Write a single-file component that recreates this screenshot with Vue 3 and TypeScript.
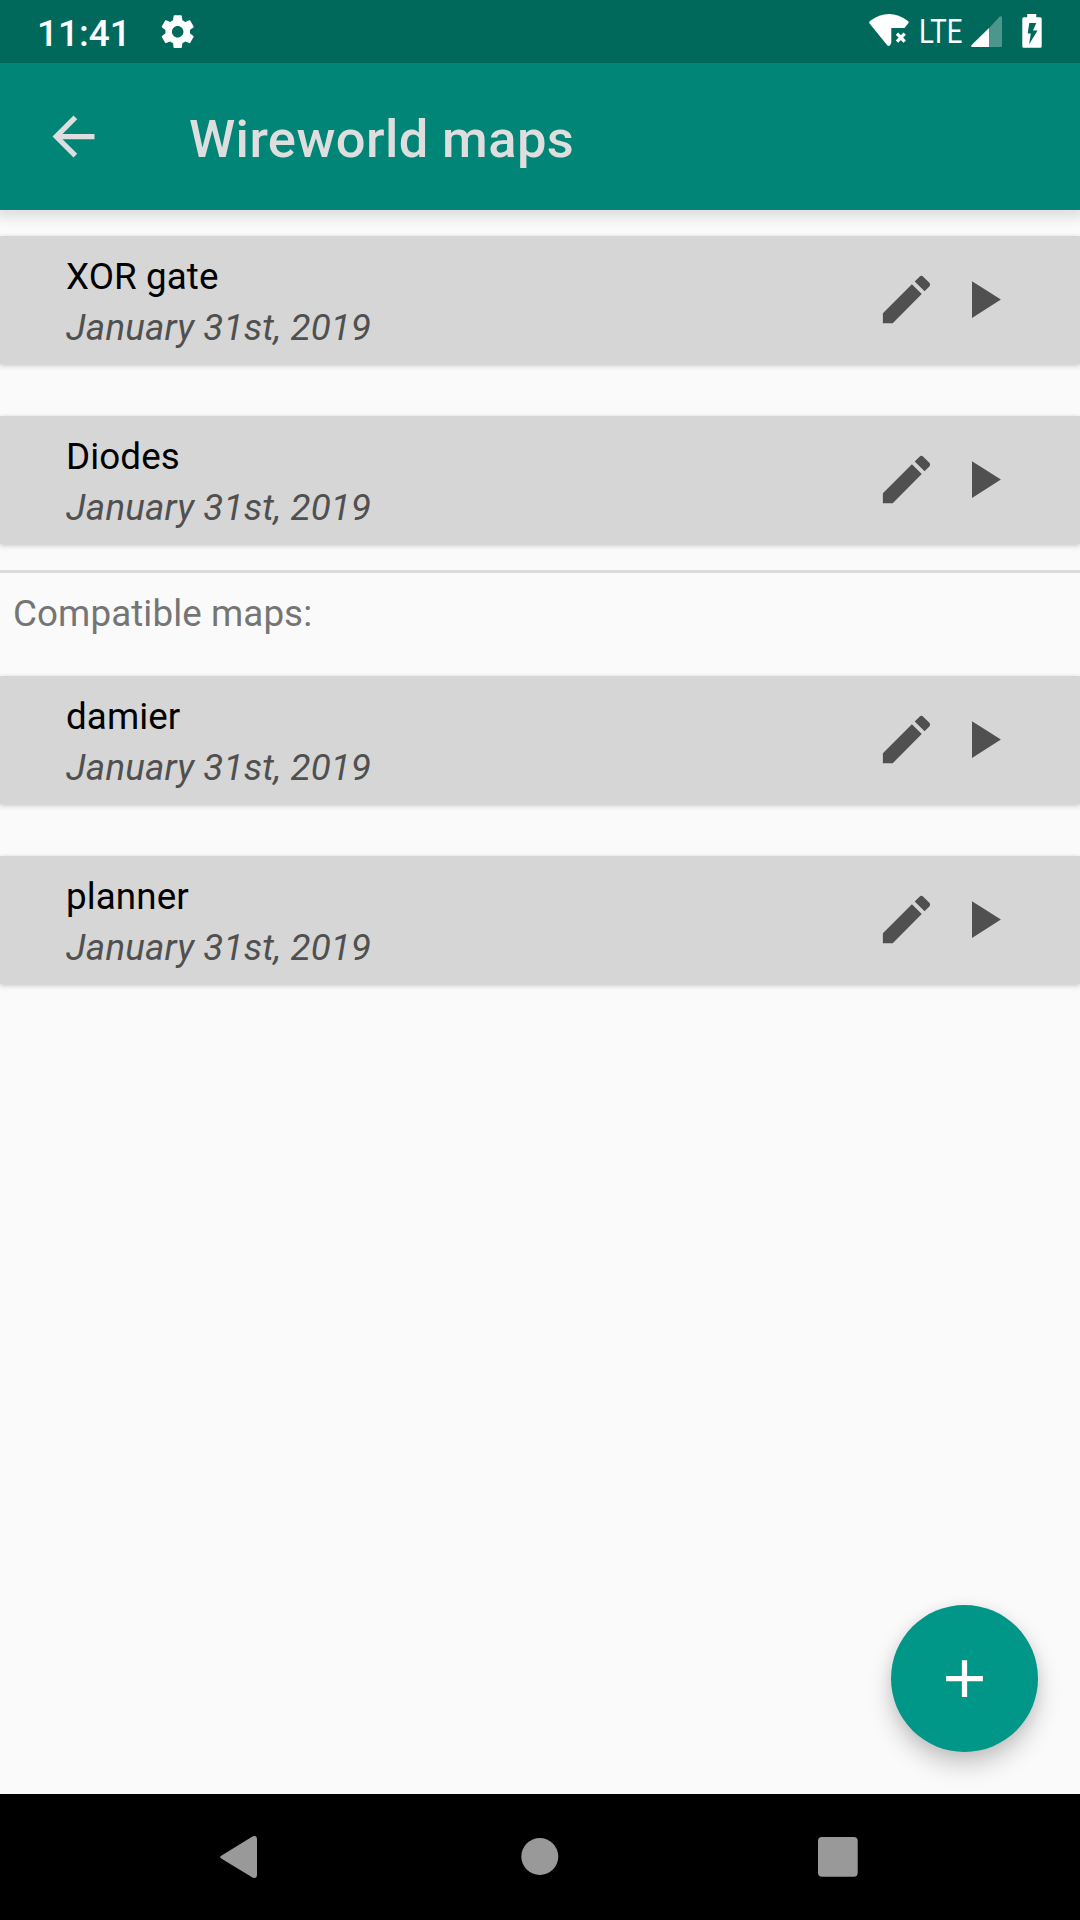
<script setup lang="ts">
interface MapEntry {
  name: string
  date: string
}

interface MapSection {
  id: string
  heading?: string
  maps: MapEntry[]
}

const sections: MapSection[] = [
  {
    id: 'own',
    maps: [
      { name: 'XOR gate', date: 'January 31st, 2019' },
      { name: 'Diodes', date: 'January 31st, 2019' },
    ],
  },
  {
    id: 'compatible',
    heading: 'Compatible maps:',
    maps: [
      { name: 'damier', date: 'January 31st, 2019' },
      { name: 'planner', date: 'January 31st, 2019' },
    ],
  },
]
</script>

<template>
  <div class="screen">
    <header class="status-bar">
      <span class="clock">11:41</span>
      <svg class="gear" viewBox="0 0 24 24">
        <path d="M19.43 12.98c.04-.32.07-.64.07-.98s-.03-.66-.07-.98l2.11-1.65c.19-.15.24-.42.12-.64l-2-3.46c-.12-.22-.39-.3-.61-.22l-2.49 1c-.52-.4-1.08-.73-1.69-.98l-.38-2.65C14.46 2.18 14.25 2 14 2h-4c-.25 0-.46.18-.49.42l-.38 2.65c-.61.25-1.17.59-1.69.98l-2.49-1c-.23-.09-.49 0-.61.22l-2 3.46c-.13.22-.07.49.12.64l2.11 1.65c-.04.32-.07.65-.07.98s.03.66.07.98l-2.11 1.65c-.19.15-.24.42-.12.64l2 3.46c.12.22.39.3.61.22l2.49-1c.52.4 1.08.73 1.69.98l.38 2.65c.03.24.24.42.49.42h4c.25 0 .46-.18.49-.42l.38-2.65c.61-.25 1.17-.59 1.69-.98l2.49 1c.23.09.49 0 .61-.22l2-3.46c.12-.22.07-.49-.12-.64l-2.11-1.65zM12 15.5c-1.93 0-3.500-1.570-3.500-3.500s1.570-3.500 3.500-3.500 3.500 1.570 3.500 3.500-1.570 3.500-3.500 3.500z" />
      </svg>
      <div class="indicators">
        <svg class="wifi" viewBox="0 0 40 34">
          <path d="M.4 9.300Q-.2 8 1 7C13-2.300 27-2.300 39 7Q40.200 8 39.300 9.300L35.500 14H22.300V28.800L21 31.300Q19.700 32.800 18.200 31.300Z" />
          <path class="cross" d="M28 19.600L35.700 27.600M35.700 19.600L28 27.600" />
        </svg>
        <span class="network">LTE</span>
        <svg class="signal" viewBox="0 0 31 31">
          <path class="dim" d="M18 12.300L28.700 .6Q31 -.8 31 2V29.500Q31 31 29.500 31H18Z" />
          <path d="M18 12V31H1.200Q-.6 30.700 .4 29.300Z" />
        </svg>
        <svg class="battery" viewBox="0 0 20 34">
          <path fill-rule="evenodd" d="M5.200 0H14.300V3.300H18.200Q19.700 3.300 19.700 4.800V32.300Q19.700 33.800 18.200 33.800H1.800Q.3 33.800 .3 32.300V4.800Q.3 3.300 1.800 3.300H5.200ZM7.300 9L5.700 19.400H8.800L7 30.500L15.600 16.500H11L14.300 9Z" />
        </svg>
      </div>
    </header>

    <div class="app-bar">
      <svg class="icon" viewBox="0 0 24 24">
        <path d="M20 11H7.830l5.590-5.590L12 4l-8 8 8 8 1.410-1.410L7.830 13H20v-2z" />
      </svg>
      <h1 class="title">Wireworld maps</h1>
    </div>

    <main class="content">
      <section v-for="section in sections" :key="section.id" class="section">
        <h2 v-if="section.heading" class="heading">{{ section.heading }}</h2>
        <article v-for="entry in section.maps" :key="entry.name" class="card">
          <div class="details">
            <div class="name">{{ entry.name }}</div>
            <div class="date">{{ entry.date }}</div>
          </div>
          <div class="actions">
            <svg class="icon" viewBox="0 0 24 24">
              <path d="M3 17.250V21h3.750L17.810 9.940l-3.750-3.750L3 17.250zM20.710 7.040c.39-.39.39-1.020 0-1.410l-2.340-2.340c-.39-.39-1.020-.39-1.410 0l-1.830 1.830 3.750 3.750 1.830-1.830z" />
            </svg>
            <svg class="icon" viewBox="0 0 24 24">
              <path d="M8 5v14l11-7z" />
            </svg>
          </div>
        </article>
      </section>

      <button class="fab" type="button" aria-label="Add map">
        <svg class="icon" viewBox="0 0 24 24">
          <path d="M19 13h-6v6h-2v-6H5v-2h6V5h2v6h6v2z" />
        </svg>
      </button>
    </main>

    <nav class="nav-bar">
      <svg viewBox="0 0 42 42">
        <path d="M3.600 19.400L34.500 .4Q39 -1.200 39 3V39Q39 43.200 34.500 41.600L3.600 22.800Q.6 21 3.600 19.400Z" />
      </svg>
      <svg viewBox="0 0 42 42">
        <circle cx="21.800" cy="20.500" r="18.500" />
      </svg>
      <svg viewBox="0 0 42 42">
        <rect x="1" y="1" width="39.700" height="39.700" rx="4" />
      </svg>
    </nav>
  </div>
</template>

<style>
body {
  margin: 0;
}
</style>

<style scoped>
.screen {
  display: flex;
  flex-direction: column;
  width: 1080px;
  height: 1920px;
  overflow: hidden;
  background: #fafafa;
  font-family: Roboto, "Liberation Sans", sans-serif;
}

svg {
  display: block;
  flex: none;
  fill: currentColor;
}

.icon {
  width: 63px;
  height: 63px;
}

.status-bar {
  display: flex;
  align-items: center;
  flex: none;
  position: relative;
  z-index: 2;
  box-sizing: border-box;
  height: 63px;
  padding: 0 38px 0 37px;
  background: #00695c;
  color: #fff;
}

.clock {
  width: 121px;
  padding-top: 5px;
  font-size: 37px;
  font-weight: 500;
  line-height: 44px;
}

.gear {
  width: 39.400px;
  height: 39.400px;
}

.indicators {
  display: flex;
  align-items: flex-start;
  align-self: flex-start;
  margin-left: auto;
  padding-top: 14px;
}

.wifi {
  width: 40px;
  height: 34px;
}

.cross {
  fill: none;
  stroke: currentColor;
  stroke-width: 3.400;
}

.network {
  width: 52px;
  margin-left: 10px;
  font-size: 32.500px;
  line-height: 36px;
  transform: scaleX(0.850);
  transform-origin: left;
}

.signal {
  width: 31px;
  height: 31px;
  margin: 2px 20px 0 0;
}

.dim {
  opacity: 0.3;
}

.battery {
  width: 20px;
  height: 34px;
}

.app-bar {
  display: flex;
  align-items: center;
  flex: none;
  position: relative;
  z-index: 1;
  box-sizing: border-box;
  height: 147px;
  padding: 0 42px;
  background: #008577;
  color: #dedede;
  box-shadow: 0 4px 10px 4px rgba(0, 0, 0, 0.080), 0 0 20px 4px rgba(0, 0, 0, 0.040);
}

.title {
  margin: 5px 0 0 84px;
  font-size: 52.500px;
  font-weight: 500;
  letter-spacing: 0.400px;
  line-height: 62px;
}

.content {
  position: relative;
  flex: 1;
}

.section {
  display: flex;
  flex-direction: column;
  gap: 52px;
  padding: 26px 0;
}

.section + .section {
  gap: 0;
  padding-top: 0;
  border-top: 3px solid #dadada;
}

.section + .section .card + .card {
  margin-top: 52px;
}

.heading {
  box-sizing: border-box;
  height: 103px;
  margin: 0;
  padding: 15px 13px 0;
  color: #757575;
  font-size: 36.750px;
  font-weight: 400;
  letter-spacing: 0.100px;
  line-height: 51px;
}

.card {
  display: flex;
  align-items: center;
  justify-content: space-between;
  box-sizing: border-box;
  height: 128px;
  padding: 0 66px;
  background: #d6d6d6;
  box-shadow: 0 2px 5px rgba(0, 0, 0, 0.170), 0 0 4px rgba(0, 0, 0, 0.060);
}

.details {
  padding-top: 4px;
  font-size: 36.750px;
  line-height: 51px;
}

.name {
  color: #000;
  letter-spacing: 0.100px;
}

.date {
  color: #505050;
  font-style: italic;
  letter-spacing: 0.160px;
}

.actions {
  display: flex;
  gap: 13px;
  padding-bottom: 1px;
  color: #505050;
}

.fab {
  display: flex;
  align-items: center;
  justify-content: center;
  position: absolute;
  right: 42px;
  bottom: 42px;
  width: 147px;
  height: 147px;
  padding: 0;
  border: 0;
  border-radius: 50%;
  background: #009688;
  color: #fff;
  box-shadow: 0 13px 24px rgba(0, 0, 0, 0.200), 0 2px 14px rgba(0, 0, 0, 0.070);
}

.nav-bar {
  display: flex;
  align-items: center;
  justify-content: space-between;
  flex: none;
  position: relative;
  box-sizing: border-box;
  height: 126px;
  padding: 0 221px 0 218px;
  background: #000;
  color: #999;
}

.nav-bar svg {
  width: 42px;
  height: 42px;
}
</style>
